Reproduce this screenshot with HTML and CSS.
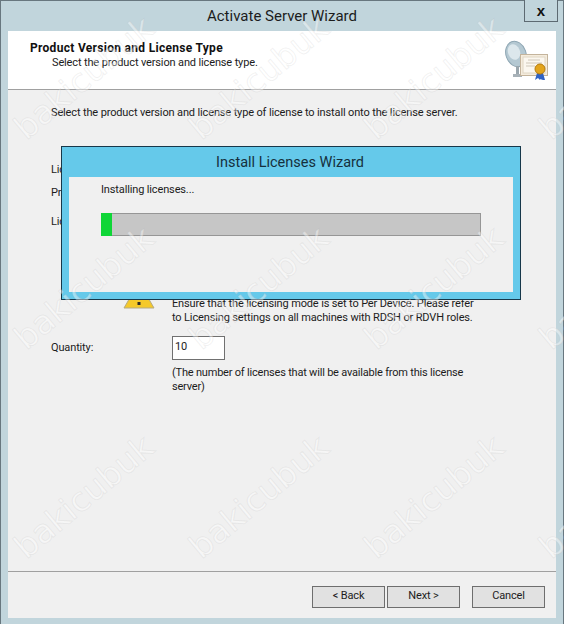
FILE: index.html
```html
<!DOCTYPE html>
<html lang="en">
<head>
    <meta charset="UTF-8">
    <title>Activate Server Wizard</title>
    <link rel="stylesheet" href="styles.css">
</head>
<body>
    <div class="window">
        <div class="titlebar">
            <span>Activate Server Wizard</span>
            <button class="close">x</button>
        </div>
        <div class="client">
            <div class="header">
                <div class="header-text">
                    <h1>Product Version and License Type</h1>
                    <p>Select the product version and license type.</p>
                </div>
                <svg class="header-icon" width="46" height="46" viewBox="0 0 46 46">
                    <ellipse cx="14" cy="16" rx="10" ry="13" fill="#b4c8d2" stroke="#8ea6b3" transform="rotate(-20 14 16)"/>
                    <ellipse cx="12" cy="14" rx="6" ry="8" fill="#dce7ec" transform="rotate(-20 12 14)"/>
                    <rect x="14" y="28" width="3" height="9" fill="#9aa6ad"/>
                    <rect x="11" y="36" width="9" height="3" fill="#a8b2b8"/>
                    <rect x="18.500" y="16.500" width="27" height="21" fill="#f5ecdd" stroke="#c4b49c"/>
                    <rect x="21" y="19" width="22" height="16" fill="#fbf7ef" stroke="#e0d6c4"/>
                    <path d="M26 22h12M24 25h16M24 28h9" stroke="#cfc7b9"/>
                    <path d="M35 35l-2 7 3-2 2 2 1-6zM39 35l-1 6 3 1 2 0-2-7z" fill="#2f62c4"/>
                    <circle cx="38" cy="31" r="5" fill="#e3a41c" stroke="#b57c10"/>
                </svg>
            </div>
            <div class="content">
                <p class="intro">Select the product version and license type of license to install onto the license server.</p>
                <div class="fields">
                    <div class="field field-program"><label>License program:</label><div>Per Device CAL</div></div>
                    <div class="field field-version"><label>Product version:</label><div>Windows Server 2012</div></div>
                    <div class="field"><label>License type:</label><div>RDS Per Device CAL</div></div>
                </div>
                <div class="warning">
                    <svg class="warning-icon" width="32" height="28" viewBox="0 0 32 28">
                        <path d="M16 1L31 27H1z" fill="#f5c92a" stroke="#b5aa80"/>
                        <rect x="14.500" y="10" width="3" height="9" fill="#2b2b2b"/>
                        <rect x="14.500" y="21" width="3" height="3" fill="#2b2b2b"/>
                    </svg>
                    <p>Ensure that the licensing mode is set to Per Device. Please refer to Licensing settings on all machines with RDSH or RDVH roles.</p>
                </div>
                <div class="quantity">
                    <label for="qty">Quantity:</label>
                    <input id="qty" type="text" value="10">
                </div>
                <p class="hint">(The number of licenses that will be available from this license server)</p>
            </div>
            <div class="footer">
                <button>&lt; Back</button>
                <button>Next &gt;</button>
                <button class="cancel">Cancel</button>
            </div>
        </div>
    </div>

    <div class="dialog">
        <div class="dialog-title">Install Licenses Wizard</div>
        <div class="dialog-body">
            <p>Installing licenses...</p>
            <div class="progress"><div class="progress-fill"></div></div>
        </div>
    </div>

    <div class="marks">
        <span class="mark r1 c1">bakicubuk</span>
        <span class="mark r1 c2">bakicubuk</span>
        <span class="mark r1 c3">bakicubuk</span>
        <span class="mark r1 c4">bakicubuk</span>
        <span class="mark r2 c1">bakicubuk</span>
        <span class="mark r2 c2">bakicubuk</span>
        <span class="mark r2 c3">bakicubuk</span>
        <span class="mark r2 c4">bakicubuk</span>
        <span class="mark r3 c1">bakicubuk</span>
        <span class="mark r3 c2">bakicubuk</span>
        <span class="mark r3 c3">bakicubuk</span>
        <span class="mark r3 c4">bakicubuk</span>
    </div>
</body>
</html>
```

FILE: styles.css
```css
* {
    box-sizing: border-box;
}

html, body {
    margin: 0;
    height: 100%;
    overflow: hidden;
}

body {
    position: relative;
    font-family: Roboto, "Noto Sans", sans-serif;
    font-size: 11px;
    letter-spacing: -0.14px;
    line-height: 14px;
    color: #1c1c1c;
    background: #c1d5dc;
}

p {
    margin: 0;
}

.window {
    height: 624px;
    display: flex;
    flex-direction: column;
    border: 1px solid #68777f;
    border-bottom: none;
    padding: 0 7px 6px;
}

.titlebar {
    height: 30px;
    flex: none;
    position: relative;
    display: flex;
    align-items: center;
    justify-content: center;
    font-size: 15px;
    letter-spacing: 0;
    padding-bottom: 1px;
}

.close {
    position: absolute;
    top: -1px;
    right: -2px;
    width: 34px;
    height: 22px;
    background: #c1d5dc;
    border: 1px solid #5d6a72;
    border-top: none;
    font-family: "Liberation Sans", sans-serif;
    font-weight: bold;
    font-size: 15px;
    line-height: 16px;
    padding: 0;
    color: #111;
}

.client {
    flex: 1;
    display: flex;
    flex-direction: column;
    background: #f0f0f0;
}

.header {
    height: 59px;
    flex: none;
    background: #fff;
    border-bottom: 1px solid #a0a0a0;
    display: flex;
    justify-content: space-between;
    padding: 10px 0 0 22px;
}

.header h1 {
    margin: 0;
    font-size: 12px;
    letter-spacing: 0.3px;
    line-height: 15px;
    font-weight: bold;
    color: #111;
}

.header p {
    margin-left: 22px;
}

.header-icon {
    margin: -3px 8px 0 0;
}

.content {
    flex: 1;
    padding: 16px 0 0 43px;
}

.fields {
    padding-top: 43px;
    height: 177px;
}

.field {
    display: grid;
    grid-template-columns: 121px 1fr;
}

.field-program {
    margin-bottom: 9px;
}

.field-version {
    margin-bottom: 15px;
}

.warning {
    display: flex;
    align-items: flex-start;
    padding-left: 72px;
}

.warning-icon {
    margin-top: -16px;
    margin-right: 17px;
    flex: none;
}

.warning p {
    width: 308px;
}

.quantity {
    display: grid;
    grid-template-columns: 121px 53px;
    align-items: center;
    margin-top: 11px;
}

.quantity input {
    height: 24px;
    width: 53px;
    border: 1px solid #707070;
    background: #fff;
    font: inherit;
    letter-spacing: inherit;
    color: inherit;
    padding: 0 0 4px 2px;
}

.hint {
    margin: 6px 0 0 121px;
    width: 300px;
    letter-spacing: -0.2px;
}

.footer {
    height: 47px;
    flex: none;
    border-top: 1px solid #a0a0a0;
    display: flex;
    padding: 14px 11px 0 0;
    justify-content: flex-end;
    gap: 2px;
}

.footer button {
    width: 73px;
    height: 22px;
    background: #e1e1e1;
    border: 1px solid #6e6e6e;
    font: inherit;
    letter-spacing: inherit;
    color: #1c1c1c;
    padding: 0 0 2px;
}

.footer .cancel {
    margin-left: 10px;
}

.dialog {
    position: absolute;
    left: 61px;
    top: 146px;
    width: 460px;
    height: 154px;
    background: #65c9ea;
    border: 1px solid #17384a;
    padding: 0 7px 7px;
    display: flex;
    flex-direction: column;
}

.dialog-title {
    height: 30px;
    flex: none;
    display: flex;
    align-items: center;
    justify-content: center;
    font-size: 14.5px;
    letter-spacing: 0;
    padding: 1px 2px 0 0;
    color: #15303d;
}

.dialog-body {
    flex: 1;
    background: #f0f0f0;
    padding: 6px 32px 0;
}

.progress {
    height: 23px;
    margin-top: 16px;
    background: #c6c6c6;
    border: 1px solid #969696;
    border-left: none;
}

.progress-fill {
    width: 11px;
    height: 23px;
    margin-top: -1px;
    background: #0fd637;
}

.marks {
    position: absolute;
    inset: 0;
    overflow: hidden;
    pointer-events: none;
}

.mark {
    position: absolute;
    width: 220px;
    margin-left: -110px;
    margin-top: -20px;
    line-height: 40px;
    text-align: center;
    transform: rotate(-40deg);
    font-family: "DejaVu Sans", sans-serif;
    font-size: 33px;
    letter-spacing: 0;
    color: rgba(255, 255, 255, 0.42);
    -webkit-text-stroke: 1px rgba(170, 170, 170, 0.16);
}

.r1 { top: 78px; }
.r2 { top: 288px; }
.r3 { top: 497px; }
.c1 { left: 84px; }
.c2 { left: 259px; }
.c3 { left: 434px; }
.c4 { left: 609px; }
```
